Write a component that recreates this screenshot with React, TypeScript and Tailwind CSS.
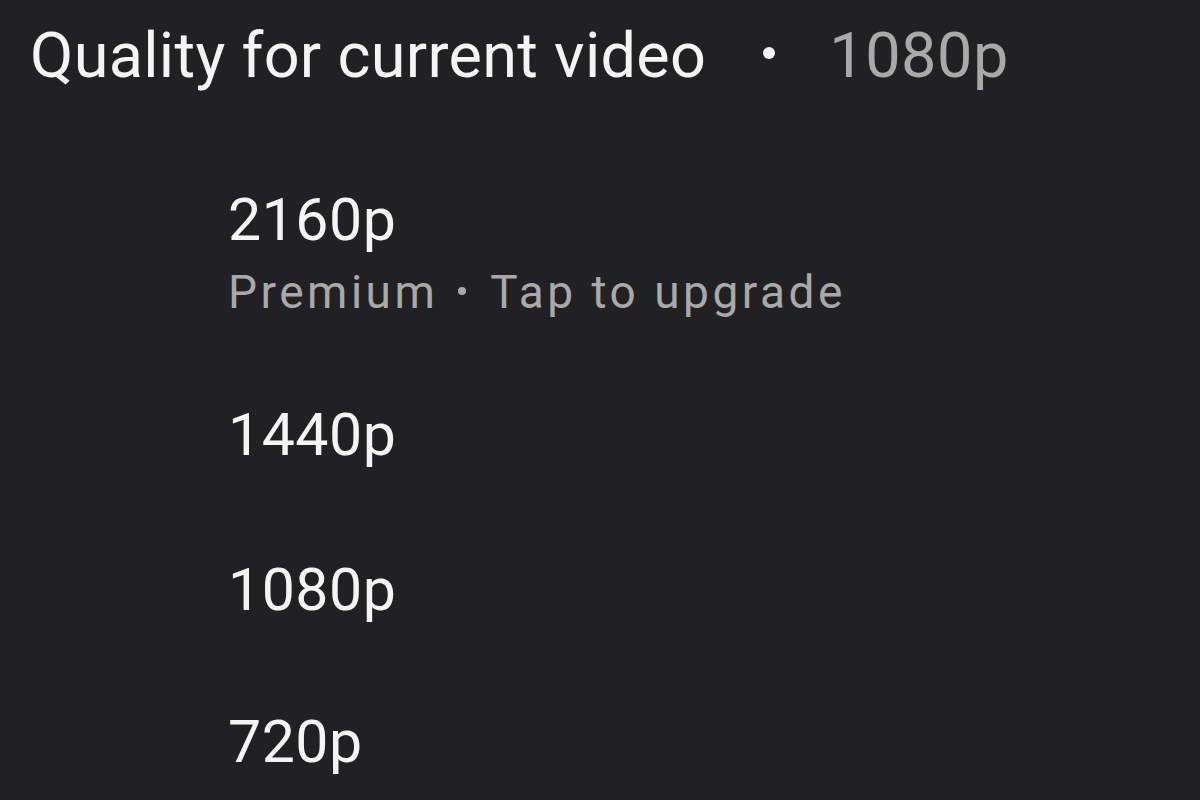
const qualities = [
  { label: "2160p", note: "Premium", action: "Tap to upgrade" },
  { label: "1440p" },
  { label: "1080p" },
  { label: "720p" },
];

export default function App() {
  return (
    <div
      className="w-[1200px] h-[800px] overflow-hidden bg-[#212123] text-[#f4f4f4]"
      style={{ fontFamily: "Roboto, 'Noto Sans', sans-serif" }}
    >
      <div className="pt-[24px] pl-[30px] flex items-center text-[63px] leading-[63px] tracking-[0.3px] whitespace-nowrap">
        <span>Quality for current video</span>
        <span className="ml-[57px] mr-[54px] mt-[-6px] w-[12px] h-[12px] rounded-full bg-[#f4f4f4]" />
        <span className="text-[#a9a9a9] tracking-[0.5px]">1080p</span>
      </div>

      <div className="pl-[228px] pt-[103px] flex flex-col">
        <div className="flex flex-col">
          <span className="text-[59px] leading-[59px] tracking-[0.5px]">{qualities[0].label}</span>
          <span className="mt-[20px] flex items-center text-[46px] leading-[46px] tracking-[3.5px] text-[#a9a9a9]">
            {qualities[0].note}
            <span className="ml-[20px] mr-[24px] mt-[-2px] w-[8px] h-[8px] rounded-full bg-[#a9a9a9]" />
            {qualities[0].action}
          </span>
        </div>
        <span className="mt-[90px] text-[59px] leading-[59px] tracking-[0.5px]">{qualities[1].label}</span>
        <span className="mt-[96px] text-[59px] leading-[59px] tracking-[0.5px]">{qualities[2].label}</span>
        <span className="mt-[93px] text-[59px] leading-[59px] tracking-[0.5px]">{qualities[3].label}</span>
      </div>
    </div>
  );
}
